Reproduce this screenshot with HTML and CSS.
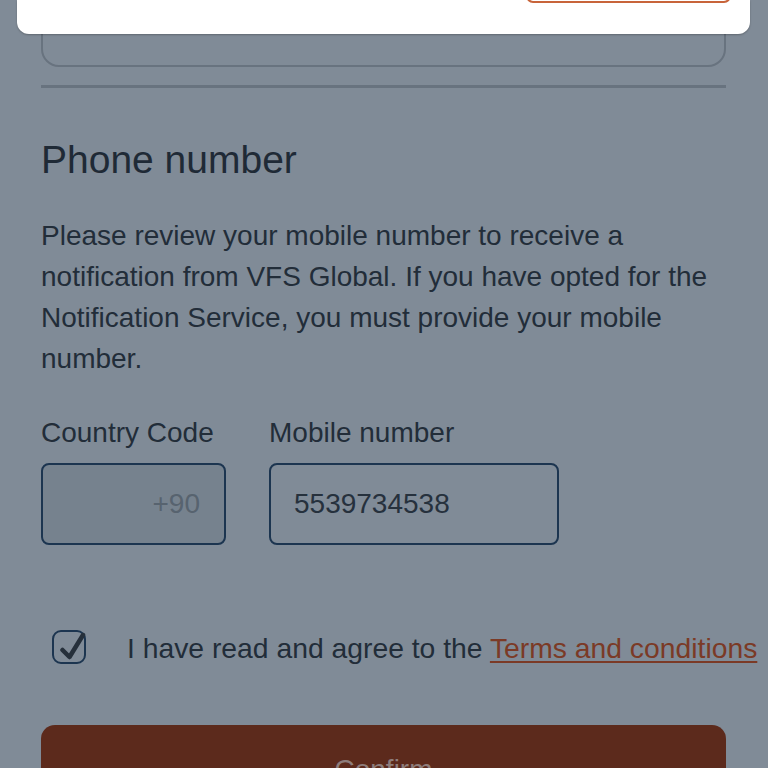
FILE: index.html
```html
<!DOCTYPE html>
<html lang="en">
<head>
    <meta charset="UTF-8">
    <meta name="viewport" content="width=device-width, initial-scale=1.0">
    <title>Phone number - VFS Global</title>
    <link rel="stylesheet" href="styles.css">
</head>
<body>
    <div class="page">
        <div class="prev-box"></div>
        <div class="divider"></div>

        <h2 class="title">Phone number</h2>
        <p class="intro">Please review your mobile number to receive a notification from VFS Global. If you have opted for the Notification Service, you must provide your mobile number.</p>

        <div class="fields">
            <div class="field code">
                <label>Country Code</label>
                <div class="input disabled">+90</div>
            </div>
            <div class="field mobile">
                <label>Mobile number</label>
                <div class="input">5539734538</div>
            </div>
        </div>

        <div class="agree">
            <span class="checkbox">
                <svg width="34" height="34" viewBox="0 0 34 34">
                    <path d="M10.5 20 L17.5 27 L31 5" fill="none" stroke="#26303b" stroke-width="4.5" stroke-linecap="round" stroke-linejoin="round"/>
                </svg>
            </span>
            <span class="agree-text">I have read and agree to the <a href="#">Terms and conditions</a></span>
        </div>

        <button class="confirm">Confirm</button>
    </div>

    <div class="modal">
        <button class="modal-btn"></button>
    </div>
</body>
</html>
```

FILE: styles.css
```css
body {
    margin: 0;
    background-color: #808b97;
    font-family: "Liberation Sans", Arial, sans-serif;
    color: #222d39;
    overflow: hidden;
}
.page {
    padding: 0 42px 0 41px;
}
.prev-box {
    height: 67px;
    box-sizing: border-box;
    border: 2px solid #68737f;
    border-radius: 0 0 18px 18px;
}
.divider {
    margin-top: 18px;
    height: 3px;
    background-color: #68737f;
}
.title {
    margin: 49px 0 0;
    font-size: 39px;
    line-height: 45px;
    font-weight: normal;
    color: #1f2a36;
}
.intro {
    margin: 33px 0 0;
    font-size: 28px;
    line-height: 41px;
}
.fields {
    display: flex;
    gap: 43px;
    margin-top: 38px;
}
.field label {
    display: block;
    font-size: 28px;
    line-height: 32px;
    margin-bottom: 14px;
}
.input {
    height: 82px;
    box-sizing: border-box;
    border: 2px solid #1c3550;
    border-radius: 8px;
    display: flex;
    align-items: center;
    font-size: 28px;
    color: #26313d;
}
.code .input {
    width: 185px;
}
.mobile .input {
    width: 290px;
    padding-left: 23px;
}
.input.disabled {
    background-color: #76828e;
    color: #57636f;
    justify-content: flex-end;
    padding-right: 24px;
}
.agree {
    display: flex;
    align-items: center;
    margin-top: 85px;
    padding-left: 11px;
    height: 34px;
}
.checkbox {
    width: 34px;
    height: 34px;
    box-sizing: border-box;
    border: 2.5px solid #1c3550;
    border-radius: 9px;
    position: relative;
    flex-shrink: 0;
}
.checkbox svg {
    position: absolute;
    left: -2.5px;
    top: -2.5px;
}
.agree-text {
    margin-left: 41px;
    font-size: 28.3px;
    white-space: nowrap;
    padding-top: 3px;
}
.agree-text a {
    color: #7b3a26;
    text-decoration: underline;
    text-underline-offset: 3px;
}
.confirm {
    display: block;
    width: 100%;
    margin-top: 61px;
    height: 90px;
    border: none;
    border-radius: 14px;
    background-color: #5c2a1c;
    color: #8e7d7b;
    font-family: inherit;
    font-size: 28px;
}
.modal {
    position: fixed;
    top: 0;
    left: 17px;
    right: 18px;
    height: 34px;
    background-color: #fff;
    border-radius: 0 0 12px 12px;
    box-shadow: 0 1px 2px rgba(0, 0, 0, 0.25);
    display: flex;
    justify-content: flex-end;
    align-items: flex-end;
    padding-right: 19px;
    padding-bottom: 31px;
    box-sizing: border-box;
}
.modal-btn {
    width: 205px;
    height: 40px;
    flex-shrink: 0;
    background: #fff;
    border: 2px solid #c8643a;
    border-radius: 7px;
}
```
